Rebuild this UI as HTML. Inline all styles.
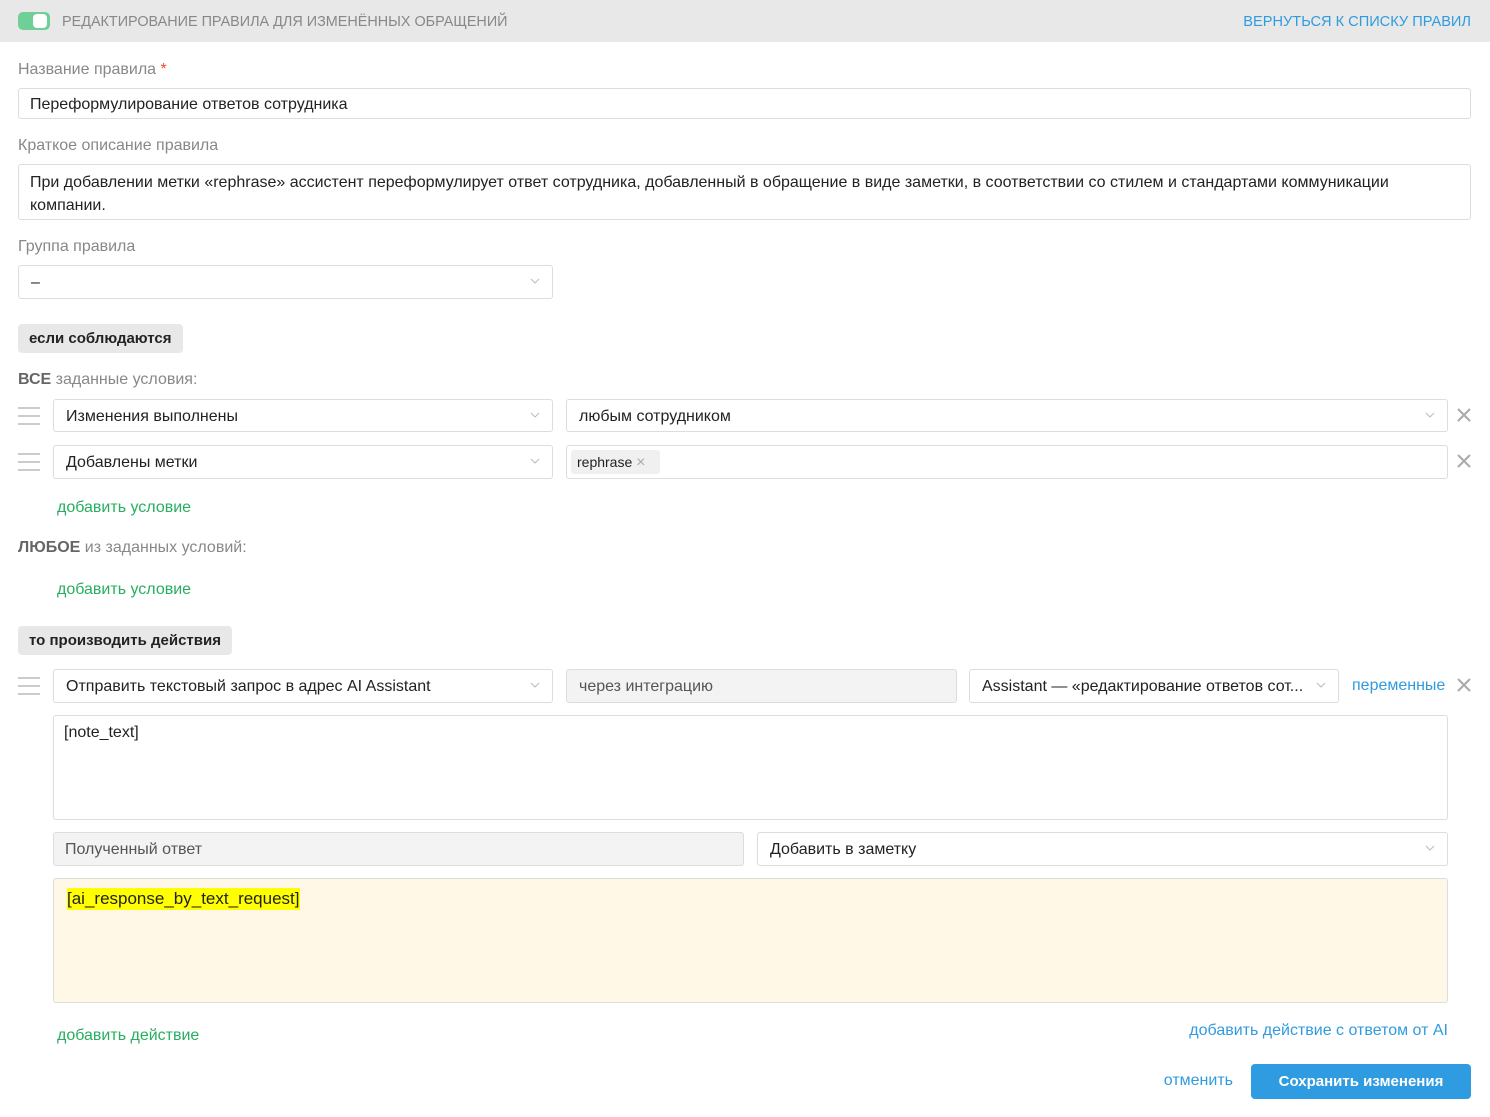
<!DOCTYPE html>
<html><head><meta charset="utf-8"><style>
*{margin:0;padding:0;box-sizing:border-box}
body{width:1490px;height:1117px;background:#fff;font-family:"Liberation Sans",sans-serif;font-size:16px;color:#222;position:relative;overflow:hidden}
.t{position:absolute;line-height:20px;white-space:nowrap}
.g{color:#888}
.b{position:absolute;border:1px solid #ddd;border-radius:3px;background:#fff}
.gr{background:#f3f3f3}
.in{position:absolute;left:12px;top:50%;transform:translateY(-45%);white-space:nowrap}
.ch{position:absolute;right:12px;top:50%;margin-top:-4px}
.grn{color:#27ae60}
.blu{color:#2f9be0}
.badge{position:absolute;background:#e8e8e8;border-radius:4px;font-weight:bold;line-height:29px;padding:0 11px;font-size:15px}
.hd{position:absolute;left:18px;width:22px}
.hd i{display:block;height:2px;background:#ccc;margin-bottom:6px}
.x{position:absolute}
</style></head><body>
<div style="position:absolute;left:0;top:0;width:1490px;height:42px;background:#e8e8e8"></div>
<div style="position:absolute;left:18px;top:12px;width:32px;height:18px;border-radius:5px;background:#6fcf97"></div>
<div style="position:absolute;left:33px;top:14px;width:14px;height:14px;border-radius:4px;background:#fff"></div>
<div class="t g" style="left:62px;top:12px;font-size:14.4px">РЕДАКТИРОВАНИЕ ПРАВИЛА ДЛЯ ИЗМЕНЁННЫХ ОБРАЩЕНИЙ</div>
<div class="t blu" style="right:19px;top:12px;font-size:14.6px">ВЕРНУТЬСЯ К СПИСКУ ПРАВИЛ</div>

<div class="t g" style="left:18px;top:60px">Название правила <span style="color:#e74c3c">*</span></div>
<div class="b" style="left:18px;top:88px;width:1453px;height:31px"><span class="in" style="left:11px">Переформулирование ответов сотрудника</span></div>

<div class="t g" style="left:18px;top:136px">Краткое описание правила</div>
<div class="b" style="left:18px;top:164px;width:1453px;height:56px"><div style="position:absolute;left:11px;top:6px;right:10px;line-height:23px;white-space:nowrap">При добавлении метки «rephrase» ассистент переформулирует ответ сотрудника, добавленный в обращение в виде заметки, в соответствии со стилем и стандартами коммуникации<br>компании.</div></div>

<div class="t g" style="left:18px;top:237px">Группа правила</div>
<div class="b" style="left:18px;top:265px;width:535px;height:34px"><span class="in">–</span><svg class="ch" width="10" height="7"><path d="M1 1l4 4 4-4" fill="none" stroke="#bbb"/></svg></div>

<div class="badge" style="left:18px;top:324px">если соблюдаются</div>
<div class="t g" style="left:18px;top:370px"><b style="color:#666">ВСЕ</b> заданные условия:</div>

<div class="hd" style="top:407px"><i></i><i></i><i></i></div>
<div class="b" style="left:53px;top:399px;width:500px;height:33px"><span class="in">Изменения выполнены</span><svg class="ch" width="10" height="7"><path d="M1 1l4 4 4-4" fill="none" stroke="#bbb"/></svg></div>
<div class="b" style="left:566px;top:399px;width:882px;height:33px"><span class="in">любым сотрудником</span><svg class="ch" width="10" height="7"><path d="M1 1l4 4 4-4" fill="none" stroke="#bbb"/></svg></div>
<svg class="x" style="left:1457px;top:408px" width="14" height="14"><path d="M1 1l12 12M13 1L1 13" stroke="#aaa" stroke-width="2"/></svg>

<div class="hd" style="top:453px"><i></i><i></i><i></i></div>
<div class="b" style="left:53px;top:445px;width:500px;height:34px"><span class="in">Добавлены метки</span><svg class="ch" width="10" height="7"><path d="M1 1l4 4 4-4" fill="none" stroke="#bbb"/></svg></div>
<div class="b" style="left:566px;top:445px;width:882px;height:34px"><div style="position:absolute;left:4px;top:4px;height:24px;width:89px;background:#f0f0f0;border-radius:3px;font-size:14px;line-height:24px;padding-left:6px">rephrase <span style="color:#aaa;font-size:16px">×</span></div></div>
<svg class="x" style="left:1457px;top:454px" width="14" height="14"><path d="M1 1l12 12M13 1L1 13" stroke="#aaa" stroke-width="2"/></svg>

<div class="t grn" style="left:57px;top:498px">добавить условие</div>
<div class="t g" style="left:18px;top:538px"><b style="color:#666">ЛЮБОЕ</b> из заданных условий:</div>
<div class="t grn" style="left:57px;top:580px">добавить условие</div>

<div class="badge" style="left:18px;top:626px">то производить действия</div>

<div class="hd" style="top:677px"><i></i><i></i><i></i></div>
<div class="b" style="left:53px;top:669px;width:500px;height:34px"><span class="in">Отправить текстовый запрос в адрес AI Assistant</span><svg class="ch" width="10" height="7"><path d="M1 1l4 4 4-4" fill="none" stroke="#bbb"/></svg></div>
<div class="b gr" style="left:566px;top:669px;width:391px;height:34px"><span class="in" style="color:#555">через интеграцию</span></div>
<div class="b" style="left:969px;top:669px;width:370px;height:34px"><span class="in">Assistant — «редактирование ответов сот...</span><svg class="ch" width="10" height="7"><path d="M1 1l4 4 4-4" fill="none" stroke="#bbb"/></svg></div>
<div class="t blu" style="left:1352px;top:676px">переменные</div>
<svg class="x" style="left:1457px;top:678px" width="14" height="14"><path d="M1 1l12 12M13 1L1 13" stroke="#aaa" stroke-width="2"/></svg>

<div class="b" style="left:53px;top:715px;width:1395px;height:105px"><div style="position:absolute;left:10px;top:8px">[note_text]</div></div>

<div class="b gr" style="left:53px;top:832px;width:691px;height:34px"><span class="in" style="left:11px;color:#555">Полученный ответ</span></div>
<div class="b" style="left:757px;top:832px;width:691px;height:34px"><span class="in">Добавить в заметку</span><svg class="ch" width="10" height="7"><path d="M1 1l4 4 4-4" fill="none" stroke="#bbb"/></svg></div>

<div class="b" style="left:53px;top:878px;width:1395px;height:125px;background:#fff8e6"><div style="position:absolute;left:13px;top:9px;font-size:17px;line-height:22px;background:#ffff00">[ai_response_by_text_request]</div></div>

<div class="t grn" style="left:57px;top:1026px">добавить действие</div>
<div class="t blu" style="right:42px;top:1021px">добавить действие с ответом от AI</div>
<div class="t blu" style="right:257px;top:1071px">отменить</div>
<div style="position:absolute;left:1251px;top:1064px;width:220px;height:35px;background:#2f9be0;border-radius:4px;color:#fff;font-weight:bold;text-align:center;line-height:35px;font-size:15px">Сохранить изменения</div>
</body></html>
